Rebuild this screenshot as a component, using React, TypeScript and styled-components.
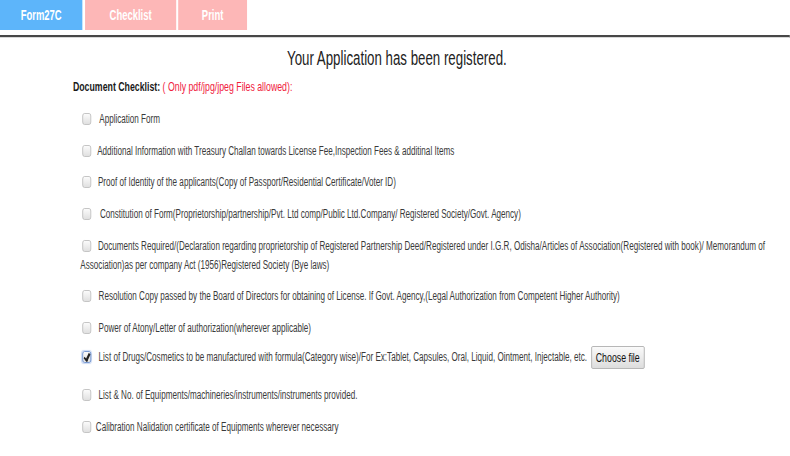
import styled, {createGlobalStyle} from 'styled-components';

// the reference page is rendered squeezed sideways, so the sheet is laid out wide and scaled on x
const SQUEEZE = 0.675;
const SHEET_WIDTH = Math.round(790 / SQUEEZE);

const GlobalStyle = createGlobalStyle`
  html, body {
    margin: 0;
    padding: 0;
    background: #ffffff;
  }
  body {
    font-family: "Liberation Sans", Arial, sans-serif;
    color: #333333;
  }
`;

const Page = styled.div`
  width: 790px;
  height: 456px;
  overflow: hidden;
  background: #ffffff;
`;

const Sheet = styled.div<{$width: number; $squeeze: number}>`
  width: ${({$width}) => $width}px;
  transform: scaleX(${({$squeeze}) => $squeeze});
  transform-origin: 0 0;
`;

const TabBar = styled.div`
  display: flex;
  height: 30px;
  margin-bottom: 5px;
`;

const Tab = styled.div<{$active?: boolean; $width: number; $gap: number}>`
  width: ${({$width}) => $width}px;
  margin-right: ${({$gap}) => $gap}px;
  display: flex;
  align-items: center;
  justify-content: center;
  background-color: ${({$active}) => ($active ? '#5db5fa' : '#fdb7b7')};
  color: #ffffff;
  font-weight: bold;
  font-size: 14px;
`;

const Rule = styled.div`
  height: 2px;
  background: #474747;
  border-bottom: 1px solid #d8d8d8;
`;

const Title = styled.h2`
  margin: 0;
  padding: 8px 0 0 6px;
  text-align: center;
  font-weight: normal;
  font-size: 19.7px;
  line-height: 24px;
  color: #222222;
`;

const Content = styled.div`
  padding: 9px 15px 0 108px;
`;

const Heading = styled.div`
  font-size: 13px;
  line-height: 16px;
  font-weight: bold;
  color: #1a1a1a;
`;

const Note = styled.span`
  font-weight: normal;
  color: #f0203c;
`;

const List = styled.div`
  padding: 15px 0 0 11px;
  display: flex;
  flex-direction: column;
  gap: 12.7px;
`;

const Item = styled.div<{$tall?: boolean}>`
  font-size: 12px;
  line-height: 19px;
  color: #3a3a3a;
  ${({$tall}) => ($tall ? 'margin: -4.5px 0 4px;' : '')}
`;

const Check = styled.span<{$checked?: boolean}>`
  display: inline-block;
  position: relative;
  width: 13px;
  height: 12px;
  box-sizing: border-box;
  margin: 0 6px 0 3px;
  vertical-align: -2px;
  border: 1px solid ${({$checked}) => ($checked ? '#5f86c9' : '#b9b9b9')};
  border-radius: 3px;
  background: linear-gradient(#fbfbfb, #e0e0e0);
  box-shadow: ${({$checked}) => ($checked ? '0 0 1px 1px rgba(110, 150, 220, 0.35)' : 'none')};
  ${({$checked}) =>
    $checked
      ? `&::after {
    content: '';
    position: absolute;
    left: 3px;
    top: 0px;
    width: 3px;
    height: 7px;
    border: solid #222;
    border-width: 0 3px 2px 0;
    transform: rotate(35deg);
  }`
      : ''}
`;

const Label = styled.span<{$indent: number}>`
  padding-left: ${({$indent}) => $indent}px;
`;

const FileButton = styled.span`
  display: inline-block;
  margin-left: 6px;
  padding: 0 6px;
  height: 23px;
  line-height: 21px;
  box-sizing: border-box;
  border: 1px solid #a9a9a9;
  border-radius: 2px;
  background: linear-gradient(#fafafa, #dddddd);
  color: #111111;
  font-size: 13px;
  vertical-align: middle;
`;

interface IDoc {
  text: string;
  indent: number;
  checked?: boolean;
  upload?: boolean;
}

const DOCS: IDoc[] = [
  {text: 'Application Form', indent: 6},
  {text: 'Additional Information with Treasury Challan towards License Fee,Inspection Fees & additinal Items', indent: 3},
  {text: 'Proof of Identity of the applicants(Copy of Passport/Residential Certificate/Voter ID)', indent: 4},
  {text: 'Constitution of Form(Proprietorship/partnership/Pvt. Ltd comp/Public Ltd.Company/ Registered Society/Govt. Agency)', indent: 7},
  {
    text: 'Documents Required/(Declaration regarding proprietorship of Registered Partnership Deed/Registered under I.G.R, Odisha/Articles of Association(Registered with book)/ Memorandum of Association)as per company Act (1956)Registered Society (Bye laws)',
    indent: 4,
  },
  {text: 'Resolution Copy passed by the Board of Directors for obtaining of License. If Govt. Agency,(Legal Authorization from Competent Higher Authority)', indent: 5},
  {text: 'Power of Atony/Letter of authorization(wherever applicable)', indent: 5},
  {text: 'List of Drugs/Cosmetics to be manufactured with formula(Category wise)/For Ex:Tablet, Capsules, Oral, Liquid, Ointment, Injectable, etc.', indent: 5, checked: true, upload: true},
  {text: 'List & No. of Equipments/machineries/instruments/instruments provided.', indent: 5},
  {text: 'Calibration Nalidation certificate of Equipments wherever necessary', indent: 1},
];

const App = (): JSX.Element => {
  return (
    <Page>
      <GlobalStyle />
      <Sheet $width={SHEET_WIDTH} $squeeze={SQUEEZE}>
        <TabBar>
          <Tab $active $width={122} $gap={4}>Form27C</Tab>
          <Tab $width={135} $gap={3}>Checklist</Tab>
          <Tab $width={102} $gap={0}>Print</Tab>
        </TabBar>
        <Rule />
        <Title>Your Application has been registered.</Title>
        <Content>
          <Heading>
            Document Checklist: <Note>( Only pdf/jpg/jpeg Files allowed):</Note>
          </Heading>
          <List>
            {DOCS.map((doc, i) => (
              <Item key={i} $tall={doc.upload}>
                <Check $checked={doc.checked} />
                <Label $indent={doc.indent}>{doc.text}</Label>
                {doc.upload && <FileButton>Choose file</FileButton>}
              </Item>
            ))}
          </List>
        </Content>
      </Sheet>
    </Page>
  );
};

export default App;
